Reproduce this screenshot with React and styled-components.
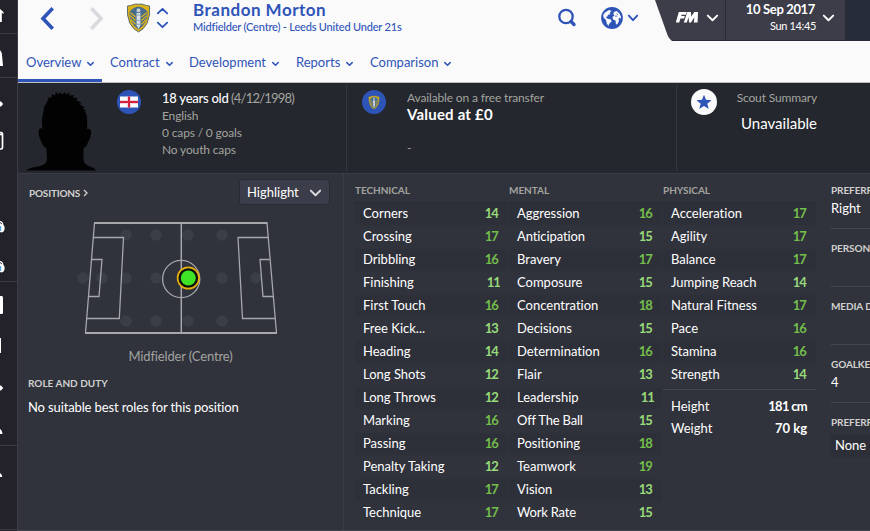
import React from "react";
import styled, { createGlobalStyle } from "styled-components";

const Global = createGlobalStyle`
  * { box-sizing: border-box; }
  html, body { margin: 0; overflow: hidden; background: #30323c; }
  body { font-family: Lato, "Open Sans", sans-serif; font-size: 13px; color: #fff; }
`;

const C = { blue: "#2f54b8", panel: "#30323c", dark: "#24272e", line: "#3d4049", muted: "#a3a49f" };

const Screen = styled.div`
  width: 870px;
  height: 531px;
  display: flex;
  overflow: hidden;
`;
const Sidebar = styled.nav`
  width: 18px;
  flex: none;
  background: #23222b;
  border-right: 1px solid #3c3d46;
`;
const Main = styled.main`
  width: 852px;
  flex: none;
  display: flex;
  flex-direction: column;
  background: ${C.panel};
`;

/* header */
const Header = styled.header`
  height: 83px;
  flex: none;
  background: #fafafb;
  color: ${C.blue};
  border-bottom: 1px solid #bcbdc3;
`;
const TitleBar = styled.div`
  height: 42px;
  display: flex;
`;
const History = styled.div`
  display: flex;
  width: 104px;
  padding: 7px 0 0 22px;
  gap: 36px;
`;
const Badge = styled.div`
  padding: 3px 0 0 4px;
  width: 30px;
`;
const Stepper = styled.div`
  display: flex;
  flex-direction: column;
  gap: 8px;
  width: 41px;
  padding: 8px 0 0 5px;
`;
const Titles = styled.div`
  width: 364px;
`;
const PlayerName = styled.h1`
  margin: 0;
  font-size: 17px;
  font-weight: 700;
  line-height: 20px;
  letter-spacing: 0.5px;
`;
const PlayerRole = styled.div`
  font-size: 11px;
  font-weight: 500;
  line-height: 13px;
  letter-spacing: -0.19px;
`;
const Tools = styled.div`
  display: flex;
  width: 98px;
  padding-top: 7px;
`;
const ToolIcon = styled.div`
  width: ${(p) => p.$w}px;
  padding-top: ${(p) => p.$top || 0}px;
`;
const Corner = styled.div`
  width: 215px;
  height: 41px;
  display: flex;
  color: #fff;
  background: #3c3d49;
  border-bottom: 1px solid #2a2b36;
  clip-path: path("M0 0 L12.500 35 Q15 41 19 41 L215 41 L215 0 Z");
`;
const FmMenu = styled.div`
  width: 71px;
  padding: 12px 0 0 21px;
  display: flex;
  gap: 9px;
  border-right: 1px solid #2b2c38;
`;
const DateMenu = styled.div`
  width: 120px;
  display: flex;
  gap: 7px;
  border-right: 1px solid #2b2c38;
`;
const DateText = styled.div`
  width: 90px;
  text-align: right;
  white-space: nowrap;
`;
const DateMain = styled.div`
  font-size: 13px;
  font-weight: 700;
  line-height: 15px;
  padding: 2px 1px 0 0;
  letter-spacing: -0.35px;
`;
const DateTime = styled.div`
  font-size: 11px;
  line-height: 15px;
  padding-top: 1px;
  letter-spacing: -0.35px;
`;
const Arrow = styled.div`
  padding-top: 10px;
`;
const Continue = styled.div`
  width: 24px;
  background: #262c39;
`;
const Tabs = styled.div`
  display: flex;
  height: 40px;
  padding-top: 11px;
`;
const Tab = styled.div`
  height: 29px;
  display: flex;
  gap: 6px;
  width: ${(p) => p.$w}px;
  padding-left: 8px;
  line-height: 18px;
  font-variant-ligatures: none;
  white-space: nowrap;
  border-bottom: 3px solid ${(p) => (p.$active ? C.blue : "transparent")};
`;
const TabArrow = styled.span`
  padding-top: 9px;
  line-height: 0;
`;

/* summary strip */
const Summary = styled.section`
  height: 91px;
  flex: none;
  display: flex;
  padding-top: 2px;
  background: ${C.dark};
  border-bottom: 1px solid #3a3c45;
`;
const Cell = styled.div`
  width: ${(p) => p.$w}px;
  height: 86px;
  display: flex;
  border-right: 1px solid ${(p) => (p.$last ? "transparent" : "#36383f")};
  padding-left: ${(p) => p.$pl}px;
`;
const Portrait = styled.div`
  width: 99px;
  height: 88px;
  padding-top: 6px;
`;
const Disc = styled.div`
  width: ${(p) => p.$d}px;
  height: ${(p) => p.$d}px;
  margin-top: ${(p) => p.$mt}px;
  flex: none;
  display: flex;
  align-items: center;
  justify-content: center;
  border-radius: 50%;
  background: ${(p) => (p.$light ? "#fafafb" : C.blue)};
`;
const Facts = styled.div`
  margin-left: 21px;
  padding-top: 4px;
`;
const Fact = styled.div`
  font-size: 12px;
  line-height: 17px;
  height: 17px;
  letter-spacing: -0.15px;
  color: ${C.muted};
  white-space: nowrap;
`;
const Age = styled(Fact)`
  font-size: 13px;
  line-height: 18px;
  height: 18px;
  letter-spacing: -0.78px;
  b { color: #fff; font-weight: 500; letter-spacing: -0.24px; }
`;
const Value = styled.div`
  font-size: 15px;
  font-weight: 700;
  line-height: 17px;
  letter-spacing: 0.2px;
  padding-bottom: 16px;
`;
const Scout = styled.div`
  width: 100px;
  text-align: right;
  padding-top: 4px;
  font-variant-ligatures: none;
`;
const Unavailable = styled.div`
  font-size: 15px;
  line-height: 20px;
  padding-top: 7px;
`;

/* positions */
const Body = styled.section`
  flex: 1;
  display: flex;
  border-bottom: 1px solid #42444e;
`;
const Positions = styled.div`
  width: 326px;
  border-right: 1px solid #3b3d47;
`;
const PosHead = styled.div`
  height: 37px;
  display: flex;
  justify-content: space-between;
  padding: 5px 13px 0 11px;
`;
const Label = styled.h2`
  margin: 0;
  font-size: 10px;
  font-weight: 700;
  line-height: 14px;
  letter-spacing: ${(p) => p.$ls || 0}px;
  white-space: nowrap;
  color: ${(p) => (p.$dim ? C.muted : "#d0d1cf")};
`;
const PosTitle = styled.div`
  display: flex;
  gap: 3px;
  padding-top: 7px;
`;
const Select = styled.button`
  width: 91px;
  height: 26px;
  display: flex;
  justify-content: space-between;
  align-items: flex-start;
  padding: 2px 8px 0 7px;
  border: 1px solid #282a34;
  border-radius: 3px;
  background: #3c3d4a;
  color: #fff;
  font: 13px/20px Lato, sans-serif;
`;
const SelectArrow = styled.span`
  padding-top: 8px;
  line-height: 0;
`;
const PitchWrap = styled.div`
  height: 136px;
  padding: 6px 0 0 56px;
`;
const PosName = styled.div`
  text-align: center;
  height: 29px;
  line-height: 18px;
  letter-spacing: -0.15px;
  color: ${C.muted};
`;
const Roles = styled.div`
  padding-left: 10px;
`;
const NoRoles = styled.div`
  line-height: 18px;
  padding-top: 8px;
  letter-spacing: -0.13px;
`;

/* attributes */
const Attributes = styled.div`
  display: flex;
  gap: 1px;
  width: 487px;
  padding: 9px 0 0 11px;
`;
const Column = styled.div`
  width: 153px;
`;
const List = styled.div`
  margin-top: 5px;
  border-top: 1px solid #2a2c35;
`;
const Attr = styled.div`
  height: 23px;
  display: flex;
  justify-content: space-between;
  padding-left: 8px;
  line-height: 20px;
  font-variant-ligatures: none;
  &:nth-child(odd) { background: #2e3039; box-shadow: inset 0 -1px ${C.panel}; }
`;
const AttrName = styled.span`
  letter-spacing: ${(p) => p.$ls || 0}px;
`;
const Score = styled.span`
  width: 14px;
  margin-right: ${(p) => (p.$v === 11 ? 8 : 10)}px;
  text-align: right;
  font-weight: 700;
  letter-spacing: -0.9px;
  line-height: 21px;
  color: ${(p) => (p.$v > 15 ? "#74bf4b" : "#98db7a")};
`;
const Measures = styled.div`
  border-top: 1px solid #454750;
  margin-top: 2px;
  padding: 6px 9px 0 8px;
`;
const Measure = styled.div`
  height: 22px;
  line-height: 20px;
  display: flex;
  justify-content: space-between;
  b { letter-spacing: ${(p) => p.$ls || 0}px; }
`;

/* right hand details */
const Side = styled.div`
  width: 39px;
  overflow: hidden;
`;
const SideBlock = styled.div`
  height: ${(p) => (p.$first ? 54 : 58)}px;
  padding-top: ${(p) => (p.$first ? 8 : 12)}px;
  border-top: 1px solid ${(p) => (p.$first ? "transparent" : "#454750")};
`;
const SideValue = styled.div`
  line-height: 18px;
  padding-top: 2px;
`;
const NoneValue = styled.div`
  height: 23px;
  margin-top: 6px;
  padding-left: 4px;
  line-height: 21px;
  background: #2d2f38;
`;

/* drawings */
const Chevron = ({ w = 9, h = 5, sw = 1.6, up, color = "currentColor" }) => (
  <svg width={w} height={h} viewBox={`0 0 ${w} ${h}`} overflow="visible" display="block">
    <path d={up ? `M.8 ${h - 0.6}L${w / 2} .8L${w - 0.8} ${h - 0.6}` : `M.8 .6L${w / 2} ${h - 0.8}L${w - 0.8} .6`}
      fill="none" stroke={color} strokeWidth={sw} strokeLinecap="round" strokeLinejoin="round" />
  </svg>
);

const Step = ({ right }) => (
  <svg width="14" height="23" viewBox="0 0 14 23">
    <path d={right ? "M2.500 2.500L11 11.500L2.500 20.500" : "M11.500 2.500L3 11.500L11.500 20.500"}
      fill="none" stroke={right ? "#d9dae0" : C.blue} strokeWidth="3.600" strokeLinecap="square" />
  </svg>
);

const Crest = ({ w = 25, h = 30 }) => (
  <svg width={w} height={h} viewBox="0 0 26 31">
    <path d="M1.500 3Q5 2.600 7 1.800Q10 .4 13 1.200Q16 .4 19 1.800Q21 2.600 24.500 3Q25.500 13 22 21Q18.500 27.500 13 30Q7.500 27.500 4 21Q.5 13 1.500 3Z" fill="#d9b21c" stroke="#4b5f70" strokeWidth=".9" />
    <path d="M3.800 9Q8 3.800 13 3.800T22.200 9Q23 14 20 20Q17.500 25 13 27.500Q8.500 25 6 20Q3 14 3.800 9Z" fill="#4a6c8c" />
    <path d="M4 13L10 18M4.500 10L10 14.500M22 13L16 18M21.500 10L16 14.500M5 17L10 22M21 17L16 22" stroke="#d9b21c" strokeWidth="1.300" />
    <path d="M11 10H15V23L13 27L11 23Z" fill="#d8dfe6" />
    <path d="M11 12.500h4M11 18h4M11 22h4" stroke="#6d89a9" strokeWidth=".7" />
    <circle cx="13" cy="7.600" r="2.500" fill="#c3d0d8" stroke="#39618f" strokeWidth=".7" />
  </svg>
);

const Search = () => (
  <svg width="20" height="21" viewBox="0 0 20 21" fill="none" stroke={C.blue}>
    <circle cx="9" cy="9.500" r="6.700" strokeWidth="2.300" />
    <path d="M14 14.500L17 17.500" strokeWidth="3.400" strokeLinecap="round" />
  </svg>
);

const Globe = () => (
  <svg width="22" height="22" viewBox="0 0 22 22">
    <circle cx="11" cy="11" r="10.900" fill={C.blue} />
    <g fill="#fafafb">
      <path d="M4 5.500L8 3L10.500 4L8.500 6L9.500 7L7 8L6 10L4.500 9.500L6 11.500L10 12.500L10.500 14.500L8 17L7.500 19L5.800 16.500L5 13L2.500 10.500L2.200 8Z" />
      <path d="M13 5L15.500 4L18 6L20 9.500L19.500 12L18.300 10.500L17.500 12L18 14L16.500 17L15 17.500L14.500 13.500L12 12.500L11.500 10L13.500 8.500L12.300 7Z" />
    </g>
    <path d="M14 9.200L16.500 9M15.500 6.500L17 7.500" stroke={C.blue} strokeWidth=".8" />
  </svg>
);

const FmLogo = () => (
  <svg width="22" height="11" viewBox="0 0 22 11" fill="#fff">
    <path d="M2.800 0H10.800L9.900 2.700H5.700L5.300 4.100H8.900L8.100 6.500H4.500L3.200 10.500H-.2Z" />
    <path d="M11.300 0H15L15.200 4.500L18.300 0H22L21.600 10.500H17.800L18.400 5.300L15 10.500H13L12.600 5.300L10.800 10.500H7.800Z" />
  </svg>
);

const Silhouette = () => (
  <svg width="90" height="80" viewBox="0 0 90 80">
    <path fill="#020202" d="M8 79.500Q11 76.500 20 75.500Q29 74 29 68L28.500 57Q25 56 23 50Q19.500 43 21 38.500Q23 36.500 24.500 38Q23 28 25.500 21L26 16L29 11L31 6L33.500 7L34 3L37 4.500L38 1L40.500 3.500L42 1.500L44.500 3.500L46.500 1L48 3.500L51 1.500L51.500 4.500L56 4L55 6.500L60 7L58 9L64 12L61 12.500L67 17L64.500 17L68 19.500L67 20.500Q70 24 69 38Q72 37 73 40Q73.500 46 70 51Q69 56 65.500 57V69Q66 74 73 76Q77 77 78 79.500Z" />
  </svg>
);

const Flag = () => (
  <svg width="18" height="12" viewBox="0 0 18 12" overflow="visible">
    <path d="M0 .5H18V11.500H0Z" fill="#fbfbfb" />
    <path d="M9 .5V11.500M0 6H18" stroke="#d4213d" strokeWidth="2" />
    <path d="M0 4.500H7.500V.5M18 4.500H10.500V.5M0 7.500H7.500V11.500M18 7.500H10.500V11.500" fill="none" stroke="#e9b7c3" strokeWidth=".6" />
  </svg>
);

const Star = () => (
  <svg width="16" height="16" viewBox="0 0 16 16">
    <path d="M8 .8L10 5.800L15.500 6.200L11.300 9.700L12.700 15L8 12L3.300 15L4.700 9.700L.5 6.200L6 5.800Z" fill={C.blue} />
  </svg>
);

const spots = [[126, 235], [156, 235], [188, 235], [222, 235], [83, 278], [102, 278], [126, 278], [156, 278], [222, 278], [256, 278], [126, 321], [156, 321], [188, 321], [222, 321]];
const Pitch = () => (
  <svg width="210" height="122" viewBox="74 217 210 122">
    {spots.map(([x, y]) => <circle key={`${x}-${y}`} cx={x} cy={y} r="5.800" fill="#3a3e47" />)}
    <g fill="none" stroke="#a5a7ab" strokeWidth="1.300">
      <path d="M94.500 223L85.500 333M267 223L276.500 333" />
      <path d="M94 223H267.500M85 333H277" strokeWidth="1.900" />
      <path d="M181.300 223V333" strokeWidth="1.500" />
      <path d="M93 237.500H123.500L119.300 318.500H86.500M268.500 237.500H238L242.500 318.500H275.500M91.500 259.500H102L99 296.500H89M269.500 259.500H260L263 296.500H273" />
      <circle cx="181.200" cy="279" r="18.600" />
    </g>
    <circle cx="188.300" cy="278" r="10.700" fill="#0c120c" stroke="#e6b00f" strokeWidth="1.700" />
    <circle cx="188.300" cy="278" r="7.500" fill="#3fe425" />
  </svg>
);

const SideIcons = () => (
  <svg width="17" height="531" viewBox="0 0 17 531">
    <path d="M0 33.500H17M0 77.500H17M0 281.500H17M0 445.500H17M0 529.500H17" stroke="#3b3c45" />
    <g fill="#fff">
      <path d="M0 9L3.500 12V14L1.800 12.800V22H0Z" />
      <path d="M0 50L1.800 53L3 66H0Z" />
      <path d="M0 101.500H1L3.200 104L1 106.500H0Z" />
      <path d="M0 221Q3 221 3.500 225Q5.500 227 4.500 230Q3 233.500 0 232Z" />
      <path d="M0 261Q3 261 3.500 265Q5.500 267 4.500 270Q3 273.500 0 272Z" />
      <path d="M0 296H1.800Q3 296 3 297.500V312.500Q3 314 1.800 314H0Z" />
      <path d="M0 338H1V353H0Z" />
      <path d="M0 385.500H1L3.200 388L1 390.500H0Z" />
      <path d="M0 429Q2 430 2.500 434H0Z" />
      <path d="M0 473Q2 474 2.200 477H0Z" />
    </g>
    <path d="M0 132.500H1Q2.500 132.500 2.500 134.500V147.500Q2.500 149 1 149H0M0 134.500H2" fill="none" stroke="#fff" strokeWidth="1.700" />
    <path d="M.5 226V231M.5 266V271" stroke="#51a4ef" strokeWidth="1.400" />
    <path d="M0 222.500L2 224M0 262.500L2 264" stroke="#23222b" strokeWidth=".9" />
  </svg>
);

const technical = [["Corners", 14], ["Crossing", 17], ["Dribbling", 16], ["Finishing", 11], ["First Touch", 16], ["Free Kick...", 13], ["Heading", 14], ["Long Shots", 12], ["Long Throws", 12], ["Marking", 16], ["Passing", 16], ["Penalty Taking", 12], ["Tackling", 17], ["Technique", 17]];
const mental = [["Aggression", 16], ["Anticipation", 15, -0.1], ["Bravery", 17], ["Composure", 15], ["Concentration", 18], ["Decisions", 15], ["Determination", 16], ["Flair", 13], ["Leadership", 11], ["Off The Ball", 15, -0.2], ["Positioning", 18], ["Teamwork", 19], ["Vision", 13], ["Work Rate", 15, -0.2]];
const physical = [["Acceleration", 17], ["Agility", 17], ["Balance", 17], ["Jumping Reach", 14], ["Natural Fitness", 17], ["Pace", 16], ["Stamina", 16], ["Strength", 14]];
const tabs = [["Overview", 84, true], ["Contract", 79], ["Development", 107], ["Reports", 74], ["Comparison", 100]];

const AttrColumn = ({ title, items, children }) => (
  <Column>
    <Label $dim $ls={-0.05}>{title}</Label>
    <List>
      {items.map(([name, value, ls]) => (
        <Attr key={name}><AttrName $ls={ls}>{name}</AttrName><Score $v={value}>{value}</Score></Attr>
      ))}
    </List>
    {children}
  </Column>
);

const SideEntry = ({ title, first, children }) => (
  <SideBlock $first={first}>
    <Label $ls={-0.1}>{title}</Label>
    {children}
  </SideBlock>
);

export default function App() {
  return (
    <Screen>
      <Global />
      <Sidebar><SideIcons /></Sidebar>
      <Main>
        <Header>
          <TitleBar>
            <History><Step /><Step right /></History>
            <Badge><Crest /></Badge>
            <Stepper><Chevron up w={11} h={6} sw={1.8} /><Chevron w={11} h={6} sw={1.8} /></Stepper>
            <Titles>
              <PlayerName>Brandon Morton</PlayerName>
              <PlayerRole>Midfielder (Centre) - Leeds United Under 21s</PlayerRole>
            </Titles>
            <Tools>
              <ToolIcon $w={44}><Search /></ToolIcon>
              <ToolIcon $w={27}><Globe /></ToolIcon>
              <ToolIcon $w={12} $top={8}><Chevron w={10} h={6} sw={1.9} /></ToolIcon>
            </Tools>
            <Corner>
              <FmMenu><FmLogo /><ToolIcon $w={11} $top={3}><Chevron w={11} h={6} sw={1.9} /></ToolIcon></FmMenu>
              <DateMenu>
                <DateText><DateMain>10 Sep 2017</DateMain><DateTime>Sun 14:45</DateTime></DateText>
                <Arrow><ToolIcon $w={11} $top={5}><Chevron w={11} h={6} sw={1.9} /></ToolIcon></Arrow>
              </DateMenu>
              <Continue />
            </Corner>
          </TitleBar>
          <Tabs>
            {tabs.map(([t, w, on]) => (
              <Tab key={t} $w={w} $active={on}>{t}<TabArrow><Chevron w={7} h={4} sw={1.5} /></TabArrow></Tab>
            ))}
          </Tabs>
        </Header>
        <Summary>
          <Cell $w={329} $pl={0}>
            <Portrait><Silhouette /></Portrait>
            <Disc $d={24} $mt={5}><Flag /></Disc>
            <Facts>
              <Age><b>18 years old</b> (4/12/1998)</Age>
              <Fact>English</Fact>
              <Fact>0 caps / 0 goals</Fact>
              <Fact>No youth caps</Fact>
            </Facts>
          </Cell>
          <Cell $w={330} $pl={15}>
            <Disc $d={24} $mt={5}><Crest w={12} h={15} /></Disc>
            <Facts>
              <Fact>Available on a free transfer</Fact>
              <Value>Valued at £0</Value>
              <Fact>-</Fact>
            </Facts>
          </Cell>
          <Cell $w={193} $pl={14} $last>
            <Disc $d={26} $mt={4} $light><Star /></Disc>
            <Scout>
              <Fact>Scout Summary</Fact>
              <Unavailable>Unavailable</Unavailable>
            </Scout>
          </Cell>
        </Summary>
        <Body>
          <Positions>
            <PosHead>
              <PosTitle>
                <Label $ls={-0.2}>POSITIONS</Label>
                <svg width="5" height="12" viewBox="0 0 5 12"><path d="M1 4L4 7L1 10" fill="none" stroke="#d0d1cf" strokeWidth="1.300" /></svg>
              </PosTitle>
              <Select>Highlight<SelectArrow><Chevron w={11} h={6} sw={1.9} color="#dddde0" /></SelectArrow></Select>
            </PosHead>
            <PitchWrap><Pitch /></PitchWrap>
            <PosName>Midfielder (Centre)</PosName>
            <Roles>
              <Label>ROLE AND DUTY</Label>
              <NoRoles>No suitable best roles for this position</NoRoles>
            </Roles>
          </Positions>
          <Attributes>
            <AttrColumn title="TECHNICAL" items={technical} />
            <AttrColumn title="MENTAL" items={mental} />
            <AttrColumn title="PHYSICAL" items={physical}>
              <Measures>
                <Measure $ls={-0.7}>Height<b>181 cm</b></Measure>
                <Measure>Weight<b>70 kg</b></Measure>
              </Measures>
            </AttrColumn>
          </Attributes>
          <Side>
            <SideEntry title="PREFERRED FOOT" first><SideValue>Right</SideValue></SideEntry>
            <SideEntry title="PERSONALITY" />
            <SideEntry title="MEDIA DESCRIPTION" />
            <SideEntry title="GOALKEEPER RATING"><SideValue>4</SideValue></SideEntry>
            <SideEntry title="PREFERRED MOVES"><NoneValue>None</NoneValue></SideEntry>
          </Side>
        </Body>
      </Main>
    </Screen>
  );
}
